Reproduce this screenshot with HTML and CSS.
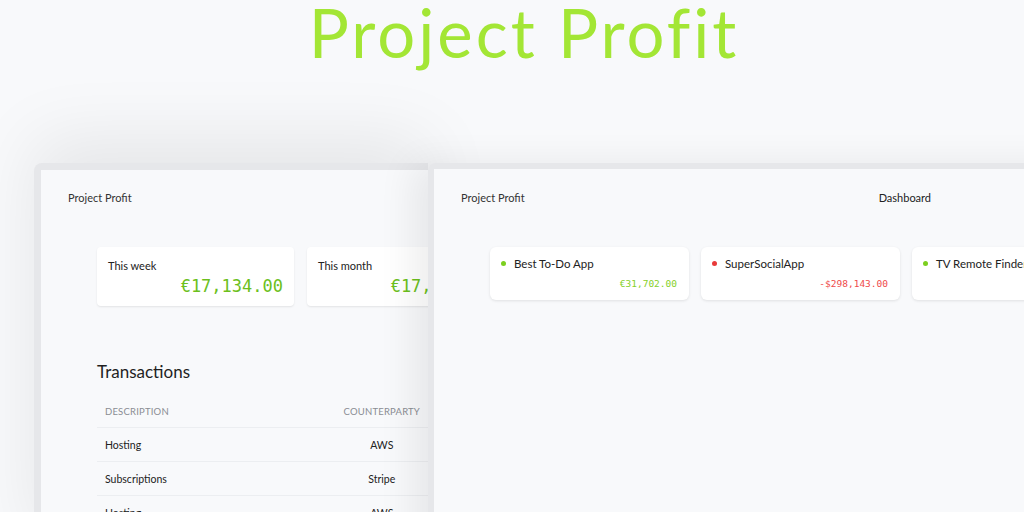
FILE: index.html
```html
<!DOCTYPE html>
<html lang="en">
<head>
<meta charset="UTF-8" />
<meta name="viewport" content="width=device-width, initial-scale=1" />
<title>Project Profit</title>
<link rel="stylesheet" href="styles.css">
</head>
<body>

<h1 class="hero-title">Project Profit</h1>

<div class="desk">
  <div class="window window-left">
    <div class="window-inner">
      <div class="app-bar">
        <span class="brand">Project Profit</span>
      </div>

      <div class="stat-row">
        <div class="stat-card">
          <div class="stat-label">This week</div>
          <div class="stat-value">€17,134.00</div>
        </div>
        <div class="stat-card">
          <div class="stat-label">This month</div>
          <div class="stat-value">€17,134.00</div>
        </div>
      </div>

      <h2 class="section-title">Transactions</h2>
      <table class="tx-table">
        <thead>
          <tr><th>Description</th><th class="col-party">Counterparty</th></tr>
        </thead>
        <tbody>
          <tr><td>Hosting</td><td class="col-party">AWS</td></tr>
          <tr><td>Subscriptions</td><td class="col-party">Stripe</td></tr>
          <tr><td>Hosting</td><td class="col-party">AWS</td></tr>
        </tbody>
      </table>
    </div>
  </div>

  <div class="window window-right">
    <div class="window-inner">
      <div class="app-bar">
        <span class="brand">Project Profit</span>
        <span class="nav-link">Dashboard</span>
      </div>

      <div class="project-row">
        <div class="project-card">
          <div class="project-name"><span class="dot dot-up"></span>Best To-Do App</div>
          <div class="project-amount up">€31,702.00</div>
        </div>
        <div class="project-card">
          <div class="project-name"><span class="dot dot-down"></span>SuperSocialApp</div>
          <div class="project-amount down">-$298,143.00</div>
        </div>
        <div class="project-card">
          <div class="project-name"><span class="dot dot-up"></span>TV Remote Finder</div>
          <div class="project-amount up">€4,210.00</div>
        </div>
      </div>
    </div>
  </div>
</div>

</body>
</html>
```

FILE: styles.css
```css
body {
  font-family: Lato, "Open Sans", sans-serif;
  background: #f8f9fb;
  margin: 0; padding: 0;
  color: #222;
  height: 512px;
  overflow: hidden;
}
.hero-title {
  margin: 0;
  text-align: center;
  font-size: 67px;
  line-height: 64px;
  font-weight: 400;
  letter-spacing: 3px;
  font-variant-ligatures: none;
  color: #a3e635;
  padding-left: 24px;
}
.desk {
  display: flex;
  margin-top: 99px;
  padding-left: 34px;
}
.window {
  background: #e6e7ea;
  border-radius: 8px 0 0 0;
  height: 400px;
  padding: 7px 0 0 7px;
  box-sizing: border-box;
  box-shadow: 0 -24px 70px rgba(0,0,0,0.08);
}
.window-left {
  width: 394px;
  flex-shrink: 0;
  overflow: hidden;
}
.window-right {
  flex: 1;
  padding: 6px 0 0 6px;
  position: relative;
  z-index: 1;
  box-shadow: -16px 0 36px rgba(0,0,0,0.07);
}
.window-inner {
  background: #f8f9fb;
  height: 100%;
  padding: 20px 0 0 27px;
  box-sizing: border-box;
}
.window-right .window-inner {
  padding-top: 21px;
}
.app-bar {
  display: flex;
  align-items: center;
  font-size: 11px;
  height: 14px;
  color: #333;
}
.nav-link {
  margin-left: 354px;
  color: #222;
}
.stat-row {
  display: flex;
  gap: 13px;
  margin: 43px 0 0 29px;
}
.stat-card {
  background: white;
  border-radius: 4px;
  box-shadow: 0 1px 2px rgba(0,0,0,0.09);
  width: 197px;
  height: 59px;
  flex-shrink: 0;
  box-sizing: border-box;
  padding: 12px 11px 0 11px;
}
.stat-label {
  font-size: 11px;
  color: #222;
}
.stat-value {
  text-align: right;
  font-family: "DejaVu Sans Mono", monospace;
  font-size: 17px;
  color: #6cc01c;
  margin-top: 4px;
}
.section-title {
  margin: 55px 0 0 29px;
  font-size: 17px;
  font-weight: 400;
  color: #1f1f1f;
}
.tx-table {
  margin: 24px 0 0 29px;
  border-collapse: collapse;
  width: 331px;
  font-size: 10.5px;
}
.tx-table th {
  text-align: left;
  font-weight: 400;
  color: #8a8d93;
  text-transform: uppercase;
  font-size: 9.5px;
  letter-spacing: 0.2px;
  padding: 0 8px 10px 8px;
  border-bottom: 1px solid #eceef1;
}
.tx-table td {
  padding: 0 8px;
  height: 33px;
  border-bottom: 1px solid #eceef1;
  color: #222;
}
.tx-table .col-party {
  text-align: center;
  width: 74px;
}
.project-row {
  display: flex;
  gap: 12px;
  margin: 43px 0 0 29px;
}
.project-card {
  background: white;
  border-radius: 6px;
  box-shadow: 0 1px 3px rgba(0,0,0,0.1);
  width: 199px;
  height: 53px;
  flex-shrink: 0;
  box-sizing: border-box;
  padding: 10px 12px 0 11px;
}
.project-name {
  display: flex;
  align-items: center;
  gap: 8px;
  font-size: 11.5px;
  color: #222;
}
.dot {
  width: 5px;
  height: 5px;
  border-radius: 50%;
}
.dot-up { background: #7ccf1f; }
.dot-down { background: #e83a3a; }
.project-amount {
  text-align: right;
  font-family: "DejaVu Sans Mono", monospace;
  font-size: 9.5px;
  margin-top: 8px;
}
.up { color: #86d02a; }
.down { color: #ef4a4a; }
```
